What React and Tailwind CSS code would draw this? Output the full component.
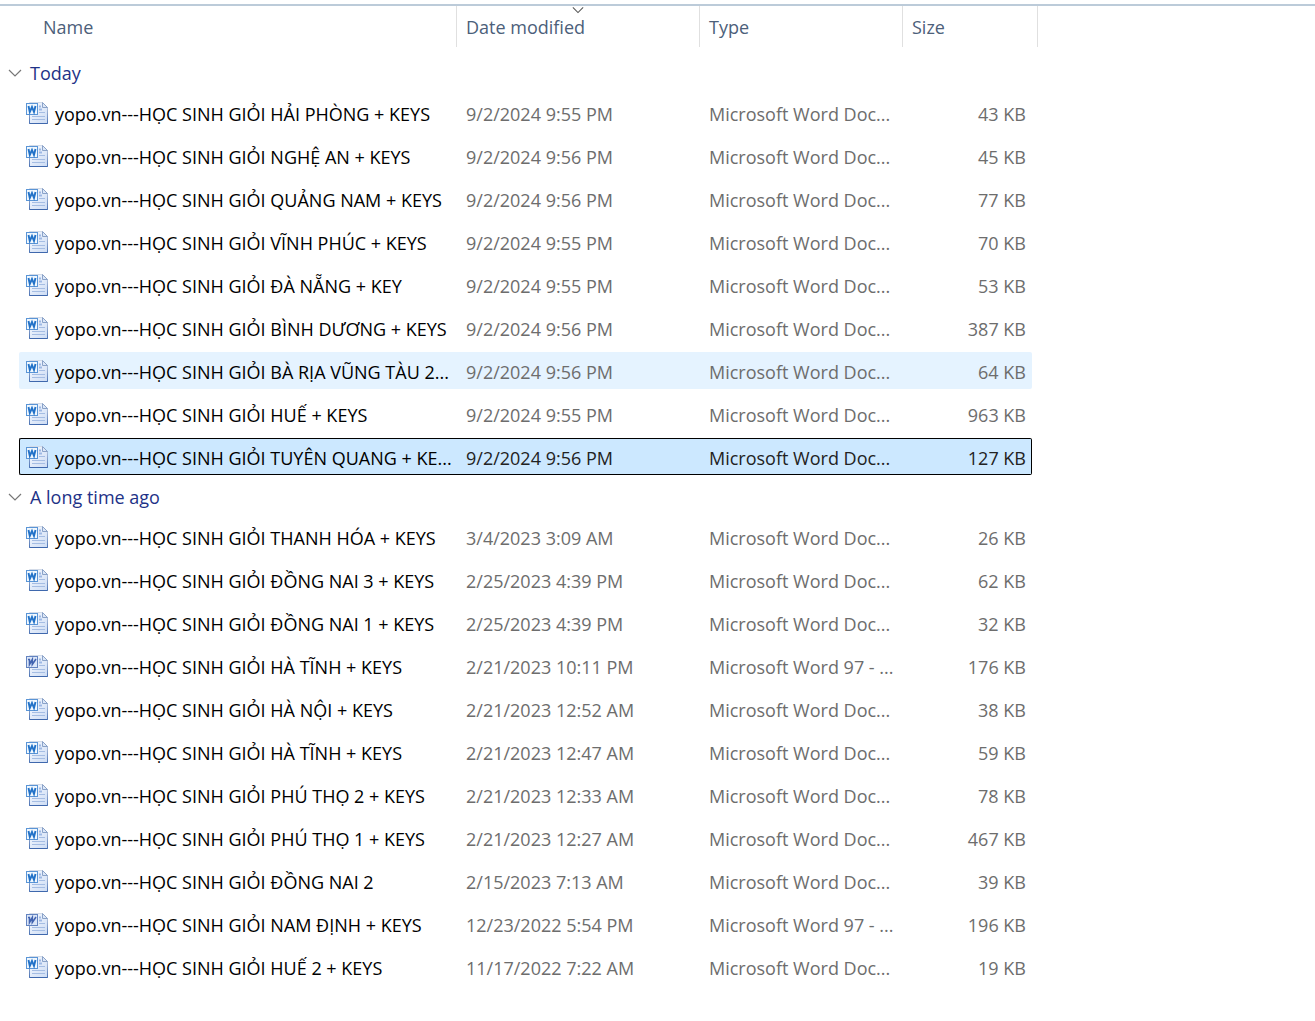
import { useState } from 'react';
import clsx from 'clsx';

const DOCX = 'Microsoft Word Doc...';
const DOC = 'Microsoft Word 97 - ...';

const groups = [
  {
    title: 'Today',
    files: [
      { name: 'yopo.vn---HỌC SINH GIỎI HẢI PHÒNG + KEYS', date: '9/2/2024 9:55 PM', type: DOCX, size: '43 KB' },
      { name: 'yopo.vn---HỌC SINH GIỎI NGHỆ AN + KEYS', date: '9/2/2024 9:56 PM', type: DOCX, size: '45 KB' },
      { name: 'yopo.vn---HỌC SINH GIỎI QUẢNG NAM + KEYS', date: '9/2/2024 9:56 PM', type: DOCX, size: '77 KB' },
      { name: 'yopo.vn---HỌC SINH GIỎI VĨNH PHÚC + KEYS', date: '9/2/2024 9:55 PM', type: DOCX, size: '70 KB' },
      { name: 'yopo.vn---HỌC SINH GIỎI ĐÀ NẴNG + KEY', date: '9/2/2024 9:55 PM', type: DOCX, size: '53 KB' },
      { name: 'yopo.vn---HỌC SINH GIỎI BÌNH DƯƠNG + KEYS', date: '9/2/2024 9:56 PM', type: DOCX, size: '387 KB' },
      { name: 'yopo.vn---HỌC SINH GIỎI BÀ RỊA VŨNG TÀU 2...', date: '9/2/2024 9:56 PM', type: DOCX, size: '64 KB', hovered: true },
      { name: 'yopo.vn---HỌC SINH GIỎI HUẾ + KEYS', date: '9/2/2024 9:55 PM', type: DOCX, size: '963 KB' },
      { name: 'yopo.vn---HỌC SINH GIỎI TUYÊN QUANG + KE...', date: '9/2/2024 9:56 PM', type: DOCX, size: '127 KB' },
    ],
  },
  {
    title: 'A long time ago',
    files: [
      { name: 'yopo.vn---HỌC SINH GIỎI THANH HÓA + KEYS', date: '3/4/2023 3:09 AM', type: DOCX, size: '26 KB' },
      { name: 'yopo.vn---HỌC SINH GIỎI ĐỒNG NAI 3 + KEYS', date: '2/25/2023 4:39 PM', type: DOCX, size: '62 KB' },
      { name: 'yopo.vn---HỌC SINH GIỎI ĐỒNG NAI 1 + KEYS', date: '2/25/2023 4:39 PM', type: DOCX, size: '32 KB' },
      { name: 'yopo.vn---HỌC SINH GIỎI HÀ TĨNH + KEYS', date: '2/21/2023 10:11 PM', type: DOC, size: '176 KB' },
      { name: 'yopo.vn---HỌC SINH GIỎI HÀ NỘI + KEYS', date: '2/21/2023 12:52 AM', type: DOCX, size: '38 KB' },
      { name: 'yopo.vn---HỌC SINH GIỎI HÀ TĨNH + KEYS', date: '2/21/2023 12:47 AM', type: DOCX, size: '59 KB' },
      { name: 'yopo.vn---HỌC SINH GIỎI PHÚ THỌ 2 + KEYS', date: '2/21/2023 12:33 AM', type: DOCX, size: '78 KB' },
      { name: 'yopo.vn---HỌC SINH GIỎI PHÚ THỌ 1 + KEYS', date: '2/21/2023 12:27 AM', type: DOCX, size: '467 KB' },
      { name: 'yopo.vn---HỌC SINH GIỎI ĐỒNG NAI 2', date: '2/15/2023 7:13 AM', type: DOCX, size: '39 KB' },
      { name: 'yopo.vn---HỌC SINH GIỎI NAM ĐỊNH + KEYS', date: '12/23/2022 5:54 PM', type: DOC, size: '196 KB' },
      { name: 'yopo.vn---HỌC SINH GIỎI HUẾ 2 + KEYS', date: '11/17/2022 7:22 AM', type: DOCX, size: '19 KB' },
    ],
  },
];

function Chevron({ className }) {
  return (
    <svg viewBox="0 0 14 8" fill="none" stroke="currentColor" strokeWidth="1.2" className={className}>
      <path d="M1 1l6 6 6-6" />
    </svg>
  );
}

function WordIcon({ legacy }) {
  return (
    <svg viewBox="0 0 24 24" className="h-6 w-6 shrink-0">
      <defs>
        <linearGradient id="page" x1="0" y1="0" x2="1" y2="1">
          <stop offset="0" stopColor="#f8fbff" />
          <stop offset="1" stopColor="#cddcf4" />
        </linearGradient>
        <linearGradient id="edge" x1="0" y1="0" x2="0" y2="1">
          <stop offset="0" stopColor="#d3dbe8" />
          <stop offset="1" stopColor="#4a72b4" />
        </linearGradient>
      </defs>
      <path d="M4.5 1.5h13l5 5v16h-18z" fill="url(#page)" stroke="url(#edge)" />
      <path d="M17.5 1.5v5h5z" fill="#dce7f7" stroke="#8aa2c8" />
      <path d="M14 5.5h2M14 8.5h3" stroke="#9db8e4" strokeWidth="2" />
      <path d="M14 11.500h6M7 15.500h13M7 18.500h13" stroke="#a5bde3" />
      <path d="M4.500 22.500h18" stroke="#3f68ad" />
      <rect x="1.5" y="2.5" width="11" height="11" fill={legacy ? '#dbe6f8' : '#f1f8fe'} stroke={legacy ? '#6484c0' : '#5b95d6'} />
      {legacy ? (
        <path d="M3 5.500h2M4.500 5.500V10.500L7.300 5.500V10.500L11 5" fill="none" stroke="#4163b0" strokeWidth="1.600" />
      ) : (
        <path d="M3.500 5l1.300 6L7 6l2 5L10.500 5" fill="none" stroke="#2272c8" strokeWidth="1.900" />
      )}
    </svg>
  );
}

function HeaderCell({ label, sorted, className }) {
  return (
    <th scope="col" className={clsx('relative h-[41px] border-r border-[#e0e0e0] p-0 text-left font-normal', className)}>
      {sorted && <Chevron className="absolute inset-x-0 top-0 mx-auto h-2 w-3 text-[#555555]" />}
      <button type="button" className="block h-[41px] w-full px-[9px] pt-px text-left">
        {label}
      </button>
    </th>
  );
}

function FileRow({ file, selected, onSelect }) {
  const cell = clsx(
    'flex h-[37px] items-center whitespace-nowrap',
    selected ? 'border-y border-black bg-[#cce8ff]' : file.hovered && 'bg-[#e5f3ff]'
  );
  const muted = selected ? 'text-[#222222]' : 'text-[#6d6d6d]';

  return (
    <tr onClick={onSelect} aria-selected={selected} className="cursor-default">
      <td className="py-[3px] pl-[19px]">
        <div className={clsx(cell, 'gap-1.5 rounded-l-xs text-black', selected ? 'border-l pl-[5px]' : 'pl-1.5')}>
          <WordIcon legacy={file.type === DOC} />
          <span className="pt-0.5">{file.name}</span>
        </div>
      </td>
      <td className="py-[3px]">
        <div className={clsx(cell, muted, 'pt-0.5 pl-[9px]')}>{file.date}</div>
      </td>
      <td className="py-[3px]">
        <div className={clsx(cell, muted, 'pt-0.5 pl-[9px]')}>{file.type}</div>
      </td>
      <td className="py-[3px] pr-1.5">
        <div className={clsx(cell, muted, 'justify-end rounded-r-xs pt-0.5', selected ? 'border-r pr-[5px]' : 'pr-1.5')}>
          {file.size}
        </div>
      </td>
      <td />
    </tr>
  );
}

function App() {
  const [selected, setSelected] = useState('0-8');
  const [collapsed, setCollapsed] = useState({});

  const toggle = (title) => setCollapsed({ ...collapsed, [title]: !collapsed[title] });

  return (
    <main className="min-h-screen bg-white pt-1 font-['Open_Sans','Noto_Sans',sans-serif] text-[18px] leading-6">
      <div className="border-t-2 border-[#bccbd9]">
        <table className="w-full table-fixed border-separate border-spacing-0">
          <thead className="text-[#4c607a]">
            <tr>
              <HeaderCell label="Name" className="w-[457px] pl-[34px]" />
              <HeaderCell label="Date modified" sorted className="w-[243px]" />
              <HeaderCell label="Type" className="w-[203px]" />
              <HeaderCell label="Size" className="w-[135px]" />
              <td />
            </tr>
          </thead>
          {groups.map((group, g) => (
            <tbody key={group.title}>
              <tr>
                <th colSpan={5} scope="rowgroup" className={clsx('p-0 text-left font-normal', g === 0 && 'pt-[7px]')}>
                  <button
                    type="button"
                    aria-expanded={!collapsed[group.title]}
                    onClick={() => toggle(group.title)}
                    className="flex h-[37px] items-center gap-2 pl-2 text-[#1e3287]"
                  >
                    <Chevron className={clsx('h-2 w-3.5 text-[#777777]', collapsed[group.title] && '-rotate-90')} />
                    <span>{group.title}</span>
                  </button>
                </th>
              </tr>
              {!collapsed[group.title] &&
                group.files.map((file, i) => (
                  <FileRow
                    key={i}
                    file={file}
                    selected={selected === `${g}-${i}`}
                    onSelect={() => setSelected(`${g}-${i}`)}
                  />
                ))}
            </tbody>
          ))}
        </table>
      </div>
    </main>
  );
}

export default App;
